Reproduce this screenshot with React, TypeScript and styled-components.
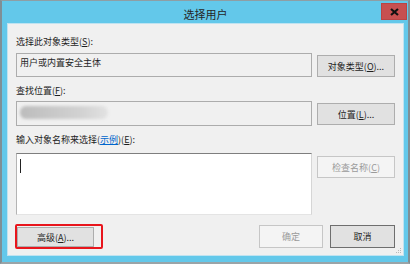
import React from 'react';
import styled, { createGlobalStyle } from 'styled-components';

const GlobalStyle = createGlobalStyle`
    html, body {
        margin: 0;
        padding: 0;
        background: #ffffff;
    }
    body {
        font-family: "Noto Sans CJK SC", "Noto Sans", sans-serif;
        color: #1e1e1e;
    }
`;

const Window = styled.div`
    box-sizing: border-box;
    width: 410px;
    height: 264px;
    display: flex;
    flex-direction: column;
    background: #63c8ea;
    border-top: 1px solid #8e9ea4;
    border-left: 2px solid #7f8f96;
    border-right: 2px solid #7f8f96;
    border-bottom: 2px solid #9aa4a8;
    padding: 0 4px 6px 5px;
`;

const TitleBar = styled.div`
    height: 23px;
    display: grid;
    grid-template-columns: 1fr auto 1fr;
    align-items: center;
`;

const Title = styled.span`
    grid-column: 2;
    font-size: 11px;
    line-height: 14px;
    color: #262626;
    padding-top: 3px;
`;

const CloseButton = styled.div`
    grid-column: 3;
    justify-self: end;
    align-self: start;
    margin-top: 2px;
    margin-right: -3px;
    width: 26px;
    height: 17px;
    box-sizing: border-box;
    background: #c75050;
    border: 1px solid #b84545;
    display: flex;
    align-items: center;
    justify-content: center;
`;

const Client = styled.div`
    position: relative;
    flex: 1;
    box-sizing: border-box;
    background: #f0f0f0;
    border: 1px solid #bfe3f1;
    padding: 12px 8px 6px 8px;
    display: flex;
    flex-direction: column;
`;

const Label = styled.div<{ $top?: number; $bottom?: number }>`
    font-size: 9px;
    line-height: 12px;
    height: 12px;
    white-space: nowrap;
    margin-top: ${p => p.$top ?? 0}px;
    margin-bottom: ${p => p.$bottom ?? 0}px;
`;

const Link = styled.span`
    color: #0066cc;
    text-decoration: underline;
`;

const FieldRow = styled.div`
    display: grid;
    grid-template-columns: 296px 78px;
    column-gap: 5px;
    align-items: start;
`;

const TextBox = styled.div<{ $h: number; $white?: boolean }>`
    box-sizing: border-box;
    height: ${p => p.$h}px;
    background: ${p => (p.$white ? '#ffffff' : '#f0f0f0')};
    border: 1px solid #acacac;
    border-color: ${p => (p.$white ? '#7e7e7e #d6d6d6 #e4e4e4 #b4b4b4' : '#acacac')};
    padding: 3px 3px;
    font-size: 9px;
    line-height: 12px;
    display: flex;
    align-items: flex-start;
`;

const Redacted = styled.span`
    display: block;
    width: 88px;
    height: 13px;
    margin-top: 1px;
    border-radius: 6px;
    background: linear-gradient(90deg, #bcbcbc 0%, #c9c9c9 40%, #d2d2d2 70%, #e2e2e2 100%);
    filter: blur(1.5px);
`;

const Caret = styled.span`
    display: block;
    width: 1px;
    height: 14px;
    margin-top: 2px;
    background: #222;
`;

const Button = styled.div<{ $h: number; $top?: number; $w?: number; $variant?: 'normal' | 'disabled' | 'default' }>`
    box-sizing: border-box;
    height: ${p => p.$h}px;
    width: ${p => (p.$w ? `${p.$w}px` : 'auto')};
    margin-top: ${p => p.$top ?? 0}px;
    display: flex;
    align-items: center;
    justify-content: center;
    font-size: 9px;
    white-space: nowrap;
    background: ${p => (p.$variant === 'disabled' ? '#f4f4f4' : '#e1e1e1')};
    border: 1px solid
        ${p => (p.$variant === 'disabled' ? '#c6c6c6' : p.$variant === 'default' ? '#6e6e6e' : '#adadad')};
    color: ${p => (p.$variant === 'disabled' ? '#9a9a9a' : '#1e1e1e')};
`;

const BottomRow = styled.div`
    margin-top: 9px;
    display: flex;
    align-items: flex-start;
`;

const Highlight = styled.div`
    border: 2px solid #e8151c;
    border-radius: 2px;
    padding: 1px 7px 0 0;
    margin-left: -1px;
`;

const Spacer = styled.div`
    flex: 1;
`;

const ButtonGap = styled.div`
    width: 7px;
`;

const SizeGrip = styled.svg`
    position: absolute;
    right: 1px;
    bottom: 1px;
`;

const Accel = ({ k }: { k: string }) => <u>{k}</u>;

const App = () => (
    <>
        <GlobalStyle />
        <Window>
            <TitleBar>
                <Title>选择用户</Title>
                <CloseButton>
                    <svg width="9" height="8" viewBox="0 0 9 8">
                        <path d="M1 1 L8 7 M8 1 L1 7" stroke="#111" strokeWidth="2.2" />
                    </svg>
                </CloseButton>
            </TitleBar>
            <Client>
                <Label $bottom={5}>
                    选择此对象类型(<Accel k="S" />):
                </Label>
                <FieldRow>
                    <TextBox $h={24}>用户或内置安全主体</TextBox>
                    <Button $h={22} $top={2}>
                        对象类型(<Accel k="O" />)...
                    </Button>
                </FieldRow>

                <Label $top={8} $bottom={4}>
                    查找位置(<Accel k="F" />):
                </Label>
                <FieldRow>
                    <TextBox $h={25}>
                        <Redacted />
                    </TextBox>
                    <Button $h={22} $top={2}>
                        位置(<Accel k="L" />)...
                    </Button>
                </FieldRow>

                <Label $top={8} $bottom={7}>
                    输入对象名称来选择(<Link>示例</Link>)(<Accel k="E" />):
                </Label>
                <FieldRow>
                    <TextBox $h={62} $white>
                        <Caret />
                    </TextBox>
                    <Button $h={22} $top={3} $variant="disabled">
                        检查名称(<Accel k="C" />)
                    </Button>
                </FieldRow>

                <BottomRow>
                    <Highlight>
                        <Button $h={20} $w={77}>
                            高级(<Accel k="A" />)...
                        </Button>
                    </Highlight>
                    <Spacer />
                    <Button $h={23} $w={64} $top={1} $variant="disabled">
                        确定
                    </Button>
                    <ButtonGap />
                    <Button $h={23} $w={65} $top={1} $variant="default">
                        取消
                    </Button>
                </BottomRow>

                <SizeGrip width="6" height="6" viewBox="0 0 6 6">
                    <rect x="4" y="0" width="1" height="1" fill="#b8b8b8" />
                    <rect x="2" y="2" width="1" height="1" fill="#b8b8b8" />
                    <rect x="4" y="2" width="1" height="1" fill="#b8b8b8" />
                    <rect x="0" y="4" width="1" height="1" fill="#b8b8b8" />
                    <rect x="2" y="4" width="1" height="1" fill="#b8b8b8" />
                    <rect x="4" y="4" width="1" height="1" fill="#b8b8b8" />
                </SizeGrip>
            </Client>
        </Window>
    </>
);

export default App;
